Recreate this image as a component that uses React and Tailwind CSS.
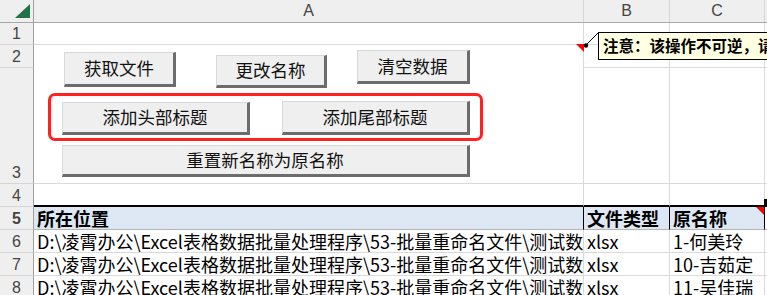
import React from 'react';

// 表格区域的列宽：行号 34，A 550，B 86，C 95，D 其余
const rows = [
  { n: '6', path: 'D:\\凌霄办公\\Excel表格数据批量处理程序\\53-批量重命名文件\\测试数据\\1-何美玲.xlsx', type: 'xlsx', name: '1-何美玲' },
  { n: '7', path: 'D:\\凌霄办公\\Excel表格数据批量处理程序\\53-批量重命名文件\\测试数据\\10-吉茹定.xlsx', type: 'xlsx', name: '10-吉茹定' },
  { n: '8', path: 'D:\\凌霄办公\\Excel表格数据批量处理程序\\53-批量重命名文件\\测试数据\\11-吴佳瑞.xlsx', type: 'xlsx', name: '11-吴佳瑞' },
];

function RowHead({ n, h }) {
  return (
    <div className={`${h} w-[34px] shrink-0 bg-[#efefef] border-r border-r-[#a0a0a0] border-b border-b-[#d5d5d5] flex items-end justify-center pb-[2px] text-[16px] leading-none text-[#444] font-['Liberation_Sans',sans-serif]`}>
      {n}
    </div>
  );
}

function Btn({ className, children }) {
  return (
    <div className={`absolute flex items-center justify-center bg-[#efefef] border-l border-t border-[#d8d8d8] border-r-[3px] border-b-[3px] border-r-[#6c6c6c] border-b-[#6c6c6c] text-[17.5px] text-[#111] ${className}`}>
      {children}
    </div>
  );
}

export default function App() {
  return (
    <div className="relative w-[767px] h-[295px] overflow-hidden bg-white font-['Noto_Sans_CJK_SC','Noto_Sans',sans-serif]">

      {/* 列标题 */}
      <div className="flex h-[23px] bg-[#efefef] border-b border-b-[#a8a8a8] text-[16px] text-[#444] font-['Liberation_Sans',sans-serif]">
        <div className="w-[34px] shrink-0 border-r border-r-[#a0a0a0] relative">
          <svg className="absolute left-0 top-0" width="34" height="22" viewBox="0 0 34 22">
            <polygon points="30,4 30,18 15,18" fill="#217346" />
          </svg>
        </div>
        <div className="w-[550px] shrink-0 border-r border-r-[#d5d5d5] flex items-center justify-center">A</div>
        <div className="w-[86px] shrink-0 border-r border-r-[#d5d5d5] flex items-center justify-center">B</div>
        <div className="w-[95px] shrink-0 border-r border-r-[#d5d5d5] flex items-center justify-center">C</div>
        <div className="flex-1"></div>
      </div>

      {/* 第1行 */}
      <div className="flex">
        <RowHead n="1" h="h-[22px]" />
        <div className="h-[22px] w-[550px] shrink-0 border-r border-b border-[#dadada]"></div>
        <div className="h-[22px] w-[86px] shrink-0 border-r border-b border-[#dadada]"></div>
        <div className="h-[22px] w-[95px] shrink-0 border-r border-b border-[#dadada]"></div>
        <div className="h-[22px] flex-1 border-b border-[#dadada]"></div>
      </div>

      {/* 第2行（A2:A3 合并） */}
      <div className="flex">
        <RowHead n="2" h="h-[23px]" />
        <div className="h-[23px] w-[550px] shrink-0 border-r border-[#dadada]"></div>
        <div className="h-[23px] w-[86px] shrink-0 border-r border-b border-[#dadada]"></div>
        <div className="h-[23px] w-[95px] shrink-0 border-r border-b border-[#dadada]"></div>
        <div className="h-[23px] flex-1 border-b border-[#dadada]"></div>
      </div>

      {/* 第3行 */}
      <div className="flex">
        <RowHead n="3" h="h-[116px]" />
        <div className="h-[116px] w-[550px] shrink-0 border-r border-b border-[#dadada]"></div>
        <div className="h-[116px] w-[86px] shrink-0 border-r border-b border-[#dadada]"></div>
        <div className="h-[116px] w-[95px] shrink-0 border-r border-b border-[#dadada]"></div>
        <div className="h-[116px] flex-1 border-b border-[#dadada]"></div>
      </div>

      {/* 第4行 */}
      <div className="flex">
        <RowHead n="4" h="h-[23px]" />
        <div className="h-[23px] w-[550px] shrink-0 border-r border-r-[#dadada] border-b-2 border-b-black"></div>
        <div className="h-[23px] w-[86px] shrink-0 border-r border-r-[#dadada] border-b-2 border-b-black"></div>
        <div className="h-[23px] w-[95px] shrink-0 border-r border-r-[#dadada] border-b-2 border-b-black"></div>
        <div className="h-[23px] flex-1 border-b-2 border-b-black"></div>
      </div>

      {/* 第5行 表头 */}
      <div className="flex text-[18px] font-bold text-black">
        <RowHead n="5" h="h-[23px]" />
        <div className="h-[23px] w-[550px] shrink-0 bg-[#dde8f4] border-r border-r-black border-b border-b-[#b4b4b4] px-[3px] flex items-end leading-[22px]">所在位置</div>
        <div className="h-[23px] w-[86px] shrink-0 bg-[#dde8f4] border-r border-r-black border-b border-b-[#b4b4b4] px-[3px] flex items-end leading-[22px] overflow-hidden whitespace-nowrap">文件类型</div>
        <div className="relative h-[23px] w-[95px] shrink-0 bg-[#dde8f4] border-r border-r-black border-b border-b-[#b4b4b4] px-[3px] flex items-end leading-[22px]">
          原名称
          <svg className="absolute right-0 top-0" width="8" height="8" viewBox="0 0 8 8">
            <polygon points="0,0 8,0 8,8" fill="#ff0000" />
          </svg>
        </div>
        <div className="h-[23px] flex-1 border-b border-b-[#b4b4b4]"></div>
      </div>

      {/* 数据行 */}
      {rows.map((r) => (
        <div key={r.n} className="flex text-[18px] text-black">
          <RowHead n={r.n} h="h-[23px]" />
          <div className="h-[23px] w-[550px] shrink-0 border-r border-b border-[#dadada] px-[3px] flex items-end leading-[22px] overflow-hidden whitespace-nowrap">{r.path}</div>
          <div className="h-[23px] w-[86px] shrink-0 border-r border-b border-[#dadada] px-[3px] flex items-end leading-[22px] overflow-hidden whitespace-nowrap">{r.type}</div>
          <div className="h-[23px] w-[95px] shrink-0 border-r border-b border-[#dadada] px-[3px] flex items-end leading-[22px] overflow-hidden whitespace-nowrap">{r.name}</div>
          <div className="h-[23px] flex-1 border-b border-[#dadada]"></div>
        </div>
      ))}

      {/* 工作表上的按钮与形状 */}
      <Btn className="left-[64px] top-[52px] w-[112px] h-[35px]">获取文件</Btn>
      <Btn className="left-[216px] top-[55px] w-[111px] h-[33px]">更改名称</Btn>
      <Btn className="left-[357px] top-[50px] w-[113px] h-[34px]">清空数据</Btn>

      <div className="absolute left-[48px] top-[93px] w-[435px] h-[48px] border-[3px] border-[#ff2020] rounded-[7px]"></div>

      <Btn className="left-[62px] top-[102px] w-[188px] h-[33px]">添加头部标题</Btn>
      <Btn className="left-[282px] top-[101px] w-[188px] h-[34px]">添加尾部标题</Btn>
      <Btn className="left-[62px] top-[145px] w-[408px] h-[32px]">重置新名称为原名称</Btn>

      {/* 批注 */}
      <svg className="absolute left-[574px] top-[30px]" width="26" height="24" viewBox="0 0 26 24">
        <polygon points="2,14 10,14 10,22" fill="#ff0000" />
        <line x1="12" y1="15" x2="24" y2="3" stroke="#000" strokeWidth="1" />
        <circle cx="12" cy="15.5" r="2.2" fill="#000" />
      </svg>
      <div className="absolute left-[598px] top-[32px] w-[200px] h-[28px] bg-[#ffffe1] border border-black pl-[4px] flex items-center text-[15.5px] font-bold text-black whitespace-nowrap overflow-hidden">
        注意：该操作不可逆，请谨慎操作！
      </div>

      <div className="absolute left-[764px] top-[199px] w-[3px] h-[8px] bg-black"></div>
    </div>
  );
}
